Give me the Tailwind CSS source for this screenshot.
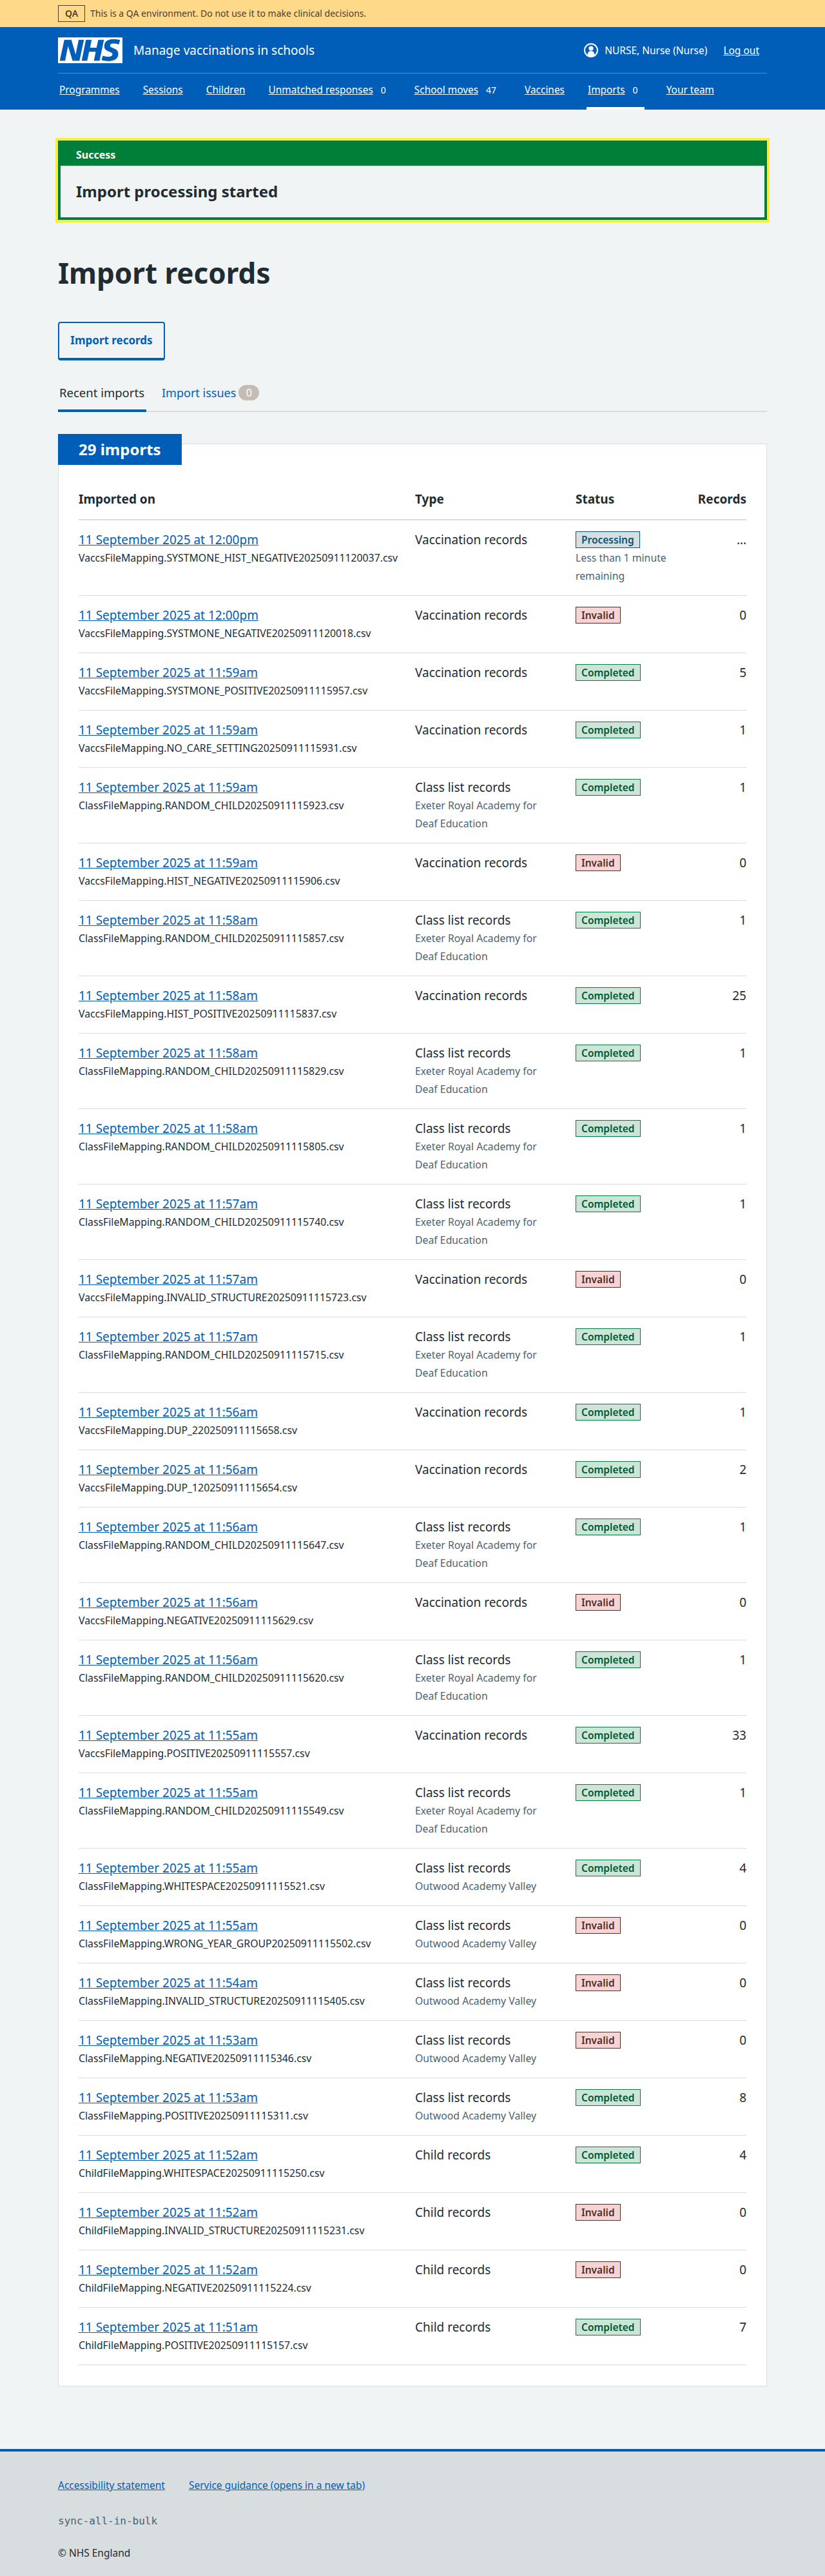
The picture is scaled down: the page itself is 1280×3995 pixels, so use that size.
<!DOCTYPE html>
<html lang="en">

<head>
    <meta charset="UTF-8">
    <meta name="viewport" content="width=device-width, initial-scale=1.0">
    <title>Import records</title>
    <script src="https://cdn.jsdelivr.net/npm/@tailwindcss/browser@4"></script>
</head>

<body class="bg-[#f0f4f5] text-[#212b32] font-['Noto_Sans',sans-serif] text-[19px] leading-7">
    <!-- QA banner -->
    <div class="bg-[#ffd98a] h-[42px]">
        <div class="w-[1100px] mx-auto h-full flex items-center text-[14px] text-[#4d3b2b]">
            <strong class="h-[26px] w-[42px] flex items-center justify-center border border-[#4d3b2b] font-semibold mr-2">QA</strong>
            <span>This is a QA environment. Do not use it to make clinical decisions.</span>
        </div>
    </div>

    <!-- Header -->
    <header class="bg-[#005eb8] text-white h-[128px]">
        <div class="w-[1100px] mx-auto">
            <div class="flex items-center justify-between pt-4 pb-[15px] border-b border-[#4c8ed1]">
                <div class="flex items-center">
                    <svg class="w-[100px] h-10" viewBox="0 0 40 16" xmlns="http://www.w3.org/2000/svg">
                        <path fill="#fff" d="M0 0h40v16H0z" />
                        <path fill="#005eb8" d="M3.9 1.5h4.4l2.6 9h.1l1.8-9h3.3l-2.8 13H9l-2.7-9h-.1l-1.8 9H1.1M17.3 1.5h3.6l-1 4.9h4L25 1.5h3.5l-2.7 13h-3.5l1.1-5.6h-4.1l-1.2 5.6h-3.4M37.7 4.4c-.7-.3-1.6-.6-2.9-.6-1.4 0-2.5.2-2.5 1.3 0 1.8 5.1 1.2 5.1 5.1 0 3.6-3.3 4.5-6.4 4.5-1.3 0-2.9-.3-4-.7l.8-2.7c.7.4 2.1.7 3.2.7s2.8-.2 2.8-1.5c0-2.1-5.1-1.3-5.1-5 0-3.4 2.9-4.4 5.8-4.4 1.6 0 3.1.2 4 .6" />
                    </svg>
                    <span class="ml-[17px] text-[19px]">Manage vaccinations in schools</span>
                </div>
                <div class="flex items-center text-[15.5px] pr-3">
                    <svg class="w-[22px] h-[22px] mr-2.5" viewBox="0 0 22 22" xmlns="http://www.w3.org/2000/svg">
                        <circle cx="11" cy="11" r="10" fill="none" stroke="#fff" stroke-width="2" />
                        <circle cx="11" cy="8" r="3.6" fill="#fff" />
                        <path fill="#fff" d="M5.5 18.5c0-4 2-6.5 5.5-6.5s5.500 2.500 5.500 6.500c-1.500 1.300-3.400 2-5.500 2s-4-.7-5.500-2z" />
                    </svg>
                    <span>NURSE, Nurse (Nurse)</span>
                    <a href="#" class="underline ml-[25px]">Log out</a>
                </div>
            </div>
            <nav class="flex gap-8 h-14 text-[15.4px]">
                <div class="flex items-center px-0.5 border-b-4 border-transparent"><a href="#" class="underline">Programmes</a></div>
                <div class="flex items-center px-0.5 border-b-4 border-transparent"><a href="#" class="underline">Sessions</a></div>
                <div class="flex items-center px-0.5 border-b-4 border-transparent"><a href="#" class="underline">Children</a></div>
                <div class="flex items-center px-0.5 border-b-4 border-transparent"><a href="#" class="underline">Unmatched responses</a><span class="text-[14px] ml-3 mr-2">0</span></div>
                <div class="flex items-center px-0.5 border-b-4 border-transparent"><a href="#" class="underline">School moves</a><span class="text-[14px] ml-3 mr-2">47</span></div>
                <div class="flex items-center px-0.5 border-b-4 border-transparent"><a href="#" class="underline">Vaccines</a></div>
                <div class="flex items-center px-0.5 border-b-4 border-white"><a href="#" class="underline">Imports</a><span class="text-[14px] ml-3 mr-2">0</span></div>
                <div class="flex items-center px-0.5 border-b-4 border-transparent"><a href="#" class="underline">Your team</a></div>
            </nav>
        </div>
    </header>

    <main class="w-[1100px] mx-auto pt-12 pb-[97px]">
        <!-- Success notification -->
        <div class="border-4 border-[#007f3b] outline-4 outline-[#ffeb3b]">
            <div class="bg-[#007f3b] text-white font-bold text-[16px] h-[35px] pl-6 flex items-center">Success</div>
            <div class="h-[80px] pl-6 flex items-center text-[24px] font-bold">Import processing started</div>
        </div>

        <h1 class="text-[44px] leading-14 font-bold mt-[54px] mb-12">Import records</h1>

        <a href="#" class="w-[166px] h-[60px] border-2 border-b-4 border-[#005eb8] rounded-[4px] text-[#005eb8] font-bold text-[17px] flex items-center justify-center">Import records</a>

        <!-- Tabs -->
        <div class="flex h-[64px] mt-4 border-b-2 border-[#d8dde0] gap-6 items-end">
            <a href="#" class="w-[137px] h-[64px] -mb-0.5 pt-5 pl-0.5 border-b-4 border-[#005eb8] whitespace-nowrap text-[18.5px]">Recent imports</a>
            <a href="#" class="h-[64px] -mb-0.5 pt-5 text-[#005eb8] text-[18px] flex items-start whitespace-nowrap">Import issues<span class="ml-1 w-8 h-6 mt-0.5 rounded-full bg-[#c5bdb4] text-white text-[16px] flex items-center justify-center">0</span></a>
        </div>

        <!-- Imports card -->
        <section class="mt-[49px] bg-white border border-[#d8dde0] px-[31px] pb-8">
            <h2 class="w-fit -ml-[32px] -mt-4 bg-[#005eb8] text-white text-[24px] font-bold h-12 px-8 flex items-center">29 imports</h2>
            <table class="w-full table-fixed border-separate border-spacing-0 [&_td]:py-4 [&_td]:pr-4 [&_td]:align-top [&_td]:border-b [&_td]:border-[#d8dde0] [&_td:last-child]:pr-0 [&_td:last-child]:text-right [&_td_a]:text-[#005eb8] [&_td_a]:underline [&_td_p]:text-[15.8px] [&_td_p]:whitespace-nowrap [&_td_span]:block [&_td_span]:w-fit [&_td_span]:my-px [&_td_span]:px-2 [&_td_span]:border [&_td_span]:text-[15.5px] [&_td_span]:leading-6 [&_td_span]:font-semibold">
                <colgroup>
                    <col class="w-[522px]">
                    <col class="w-[249px]">
                    <col class="w-[172px]">
                    <col>
                </colgroup>
                <thead class="font-bold">
                    <tr class="[&_th]:pt-[39px] [&_th]:pb-[17px] [&_th]:border-b-2 [&_th]:border-[#d8dde0] [&_th]:text-left [&_th:last-child]:text-right">
                        <th>Imported on</th>
                        <th>Type</th>
                        <th>Status</th>
                        <th>Records</th>
                    </tr>
                </thead>
                <tbody>
                    <tr>
                        <td><a href="#">11 September 2025 at 12:00pm</a><p>VaccsFileMapping.SYSTMONE_HIST_NEGATIVE20250911120037.csv</p></td>
                        <td>Vaccination records</td>
                        <td><span class="bg-[#d8dde0] border-[#00587c] text-[#00587c]">Processing</span><p class="text-[#4c6272]">Less than 1 minute<br>remaining</p></td>
                        <td>…</td>
                    </tr>
                    <tr>
                        <td><a href="#">11 September 2025 at 12:00pm</a><p>VaccsFileMapping.SYSTMONE_NEGATIVE20250911120018.csv</p></td>
                        <td>Vaccination records</td>
                        <td><span class="bg-[#f7d4d1] border-[#4d2f2f] text-[#4d2f2f]">Invalid</span></td>
                        <td>0</td>
                    </tr>
                    <tr>
                        <td><a href="#">11 September 2025 at 11:59am</a><p>VaccsFileMapping.SYSTMONE_POSITIVE20250911115957.csv</p></td>
                        <td>Vaccination records</td>
                        <td><span class="bg-[#cce5d8] border-[#007f3b] text-[#005a30]">Completed</span></td>
                        <td>5</td>
                    </tr>
                    <tr>
                        <td><a href="#">11 September 2025 at 11:59am</a><p>VaccsFileMapping.NO_CARE_SETTING20250911115931.csv</p></td>
                        <td>Vaccination records</td>
                        <td><span class="bg-[#cce5d8] border-[#007f3b] text-[#005a30]">Completed</span></td>
                        <td>1</td>
                    </tr>
                    <tr>
                        <td><a href="#">11 September 2025 at 11:59am</a><p>ClassFileMapping.RANDOM_CHILD20250911115923.csv</p></td>
                        <td>Class list records<p class="text-[#4c6272]">Exeter Royal Academy for<br>Deaf Education</p></td>
                        <td><span class="bg-[#cce5d8] border-[#007f3b] text-[#005a30]">Completed</span></td>
                        <td>1</td>
                    </tr>
                    <tr>
                        <td><a href="#">11 September 2025 at 11:59am</a><p>VaccsFileMapping.HIST_NEGATIVE20250911115906.csv</p></td>
                        <td>Vaccination records</td>
                        <td><span class="bg-[#f7d4d1] border-[#4d2f2f] text-[#4d2f2f]">Invalid</span></td>
                        <td>0</td>
                    </tr>
                    <tr>
                        <td><a href="#">11 September 2025 at 11:58am</a><p>ClassFileMapping.RANDOM_CHILD20250911115857.csv</p></td>
                        <td>Class list records<p class="text-[#4c6272]">Exeter Royal Academy for<br>Deaf Education</p></td>
                        <td><span class="bg-[#cce5d8] border-[#007f3b] text-[#005a30]">Completed</span></td>
                        <td>1</td>
                    </tr>
                    <tr>
                        <td><a href="#">11 September 2025 at 11:58am</a><p>VaccsFileMapping.HIST_POSITIVE20250911115837.csv</p></td>
                        <td>Vaccination records</td>
                        <td><span class="bg-[#cce5d8] border-[#007f3b] text-[#005a30]">Completed</span></td>
                        <td>25</td>
                    </tr>
                    <tr>
                        <td><a href="#">11 September 2025 at 11:58am</a><p>ClassFileMapping.RANDOM_CHILD20250911115829.csv</p></td>
                        <td>Class list records<p class="text-[#4c6272]">Exeter Royal Academy for<br>Deaf Education</p></td>
                        <td><span class="bg-[#cce5d8] border-[#007f3b] text-[#005a30]">Completed</span></td>
                        <td>1</td>
                    </tr>
                    <tr>
                        <td><a href="#">11 September 2025 at 11:58am</a><p>ClassFileMapping.RANDOM_CHILD20250911115805.csv</p></td>
                        <td>Class list records<p class="text-[#4c6272]">Exeter Royal Academy for<br>Deaf Education</p></td>
                        <td><span class="bg-[#cce5d8] border-[#007f3b] text-[#005a30]">Completed</span></td>
                        <td>1</td>
                    </tr>
                    <tr>
                        <td><a href="#">11 September 2025 at 11:57am</a><p>ClassFileMapping.RANDOM_CHILD20250911115740.csv</p></td>
                        <td>Class list records<p class="text-[#4c6272]">Exeter Royal Academy for<br>Deaf Education</p></td>
                        <td><span class="bg-[#cce5d8] border-[#007f3b] text-[#005a30]">Completed</span></td>
                        <td>1</td>
                    </tr>
                    <tr>
                        <td><a href="#">11 September 2025 at 11:57am</a><p>VaccsFileMapping.INVALID_STRUCTURE20250911115723.csv</p></td>
                        <td>Vaccination records</td>
                        <td><span class="bg-[#f7d4d1] border-[#4d2f2f] text-[#4d2f2f]">Invalid</span></td>
                        <td>0</td>
                    </tr>
                    <tr>
                        <td><a href="#">11 September 2025 at 11:57am</a><p>ClassFileMapping.RANDOM_CHILD20250911115715.csv</p></td>
                        <td>Class list records<p class="text-[#4c6272]">Exeter Royal Academy for<br>Deaf Education</p></td>
                        <td><span class="bg-[#cce5d8] border-[#007f3b] text-[#005a30]">Completed</span></td>
                        <td>1</td>
                    </tr>
                    <tr>
                        <td><a href="#">11 September 2025 at 11:56am</a><p>VaccsFileMapping.DUP_220250911115658.csv</p></td>
                        <td>Vaccination records</td>
                        <td><span class="bg-[#cce5d8] border-[#007f3b] text-[#005a30]">Completed</span></td>
                        <td>1</td>
                    </tr>
                    <tr>
                        <td><a href="#">11 September 2025 at 11:56am</a><p>VaccsFileMapping.DUP_120250911115654.csv</p></td>
                        <td>Vaccination records</td>
                        <td><span class="bg-[#cce5d8] border-[#007f3b] text-[#005a30]">Completed</span></td>
                        <td>2</td>
                    </tr>
                    <tr>
                        <td><a href="#">11 September 2025 at 11:56am</a><p>ClassFileMapping.RANDOM_CHILD20250911115647.csv</p></td>
                        <td>Class list records<p class="text-[#4c6272]">Exeter Royal Academy for<br>Deaf Education</p></td>
                        <td><span class="bg-[#cce5d8] border-[#007f3b] text-[#005a30]">Completed</span></td>
                        <td>1</td>
                    </tr>
                    <tr>
                        <td><a href="#">11 September 2025 at 11:56am</a><p>VaccsFileMapping.NEGATIVE20250911115629.csv</p></td>
                        <td>Vaccination records</td>
                        <td><span class="bg-[#f7d4d1] border-[#4d2f2f] text-[#4d2f2f]">Invalid</span></td>
                        <td>0</td>
                    </tr>
                    <tr>
                        <td><a href="#">11 September 2025 at 11:56am</a><p>ClassFileMapping.RANDOM_CHILD20250911115620.csv</p></td>
                        <td>Class list records<p class="text-[#4c6272]">Exeter Royal Academy for<br>Deaf Education</p></td>
                        <td><span class="bg-[#cce5d8] border-[#007f3b] text-[#005a30]">Completed</span></td>
                        <td>1</td>
                    </tr>
                    <tr>
                        <td><a href="#">11 September 2025 at 11:55am</a><p>VaccsFileMapping.POSITIVE20250911115557.csv</p></td>
                        <td>Vaccination records</td>
                        <td><span class="bg-[#cce5d8] border-[#007f3b] text-[#005a30]">Completed</span></td>
                        <td>33</td>
                    </tr>
                    <tr>
                        <td><a href="#">11 September 2025 at 11:55am</a><p>ClassFileMapping.RANDOM_CHILD20250911115549.csv</p></td>
                        <td>Class list records<p class="text-[#4c6272]">Exeter Royal Academy for<br>Deaf Education</p></td>
                        <td><span class="bg-[#cce5d8] border-[#007f3b] text-[#005a30]">Completed</span></td>
                        <td>1</td>
                    </tr>
                    <tr>
                        <td><a href="#">11 September 2025 at 11:55am</a><p>ClassFileMapping.WHITESPACE20250911115521.csv</p></td>
                        <td>Class list records<p class="text-[#4c6272]">Outwood Academy Valley</p></td>
                        <td><span class="bg-[#cce5d8] border-[#007f3b] text-[#005a30]">Completed</span></td>
                        <td>4</td>
                    </tr>
                    <tr>
                        <td><a href="#">11 September 2025 at 11:55am</a><p>ClassFileMapping.WRONG_YEAR_GROUP20250911115502.csv</p></td>
                        <td>Class list records<p class="text-[#4c6272]">Outwood Academy Valley</p></td>
                        <td><span class="bg-[#f7d4d1] border-[#4d2f2f] text-[#4d2f2f]">Invalid</span></td>
                        <td>0</td>
                    </tr>
                    <tr>
                        <td><a href="#">11 September 2025 at 11:54am</a><p>ClassFileMapping.INVALID_STRUCTURE20250911115405.csv</p></td>
                        <td>Class list records<p class="text-[#4c6272]">Outwood Academy Valley</p></td>
                        <td><span class="bg-[#f7d4d1] border-[#4d2f2f] text-[#4d2f2f]">Invalid</span></td>
                        <td>0</td>
                    </tr>
                    <tr>
                        <td><a href="#">11 September 2025 at 11:53am</a><p>ClassFileMapping.NEGATIVE20250911115346.csv</p></td>
                        <td>Class list records<p class="text-[#4c6272]">Outwood Academy Valley</p></td>
                        <td><span class="bg-[#f7d4d1] border-[#4d2f2f] text-[#4d2f2f]">Invalid</span></td>
                        <td>0</td>
                    </tr>
                    <tr>
                        <td><a href="#">11 September 2025 at 11:53am</a><p>ClassFileMapping.POSITIVE20250911115311.csv</p></td>
                        <td>Class list records<p class="text-[#4c6272]">Outwood Academy Valley</p></td>
                        <td><span class="bg-[#cce5d8] border-[#007f3b] text-[#005a30]">Completed</span></td>
                        <td>8</td>
                    </tr>
                    <tr>
                        <td><a href="#">11 September 2025 at 11:52am</a><p>ChildFileMapping.WHITESPACE20250911115250.csv</p></td>
                        <td>Child records</td>
                        <td><span class="bg-[#cce5d8] border-[#007f3b] text-[#005a30]">Completed</span></td>
                        <td>4</td>
                    </tr>
                    <tr>
                        <td><a href="#">11 September 2025 at 11:52am</a><p>ChildFileMapping.INVALID_STRUCTURE20250911115231.csv</p></td>
                        <td>Child records</td>
                        <td><span class="bg-[#f7d4d1] border-[#4d2f2f] text-[#4d2f2f]">Invalid</span></td>
                        <td>0</td>
                    </tr>
                    <tr>
                        <td><a href="#">11 September 2025 at 11:52am</a><p>ChildFileMapping.NEGATIVE20250911115224.csv</p></td>
                        <td>Child records</td>
                        <td><span class="bg-[#f7d4d1] border-[#4d2f2f] text-[#4d2f2f]">Invalid</span></td>
                        <td>0</td>
                    </tr>
                    <tr>
                        <td><a href="#">11 September 2025 at 11:51am</a><p>ChildFileMapping.POSITIVE20250911115157.csv</p></td>
                        <td>Child records</td>
                        <td><span class="bg-[#cce5d8] border-[#007f3b] text-[#005a30]">Completed</span></td>
                        <td>7</td>
                    </tr>
                </tbody>
            </table>
        </section>
    </main>

    <footer class="bg-[#d8dde0] border-t-4 border-[#005eb8] h-[200px] text-[15.5px]">
        <div class="w-[1100px] mx-auto pt-[38px]">
            <div class="flex gap-[37px] text-[#005eb8] underline"><a href="#">Accessibility statement</a><a href="#">Service guidance (opens in a new tab)</a></div>
            <p class="font-['DejaVu_Sans_Mono',monospace] text-[16px] text-[#4c6272] mt-7">sync-all-in-bulk</p>
            <p class="mt-[21px]">© NHS England</p>
        </div>
    </footer>
</body>

</html>
